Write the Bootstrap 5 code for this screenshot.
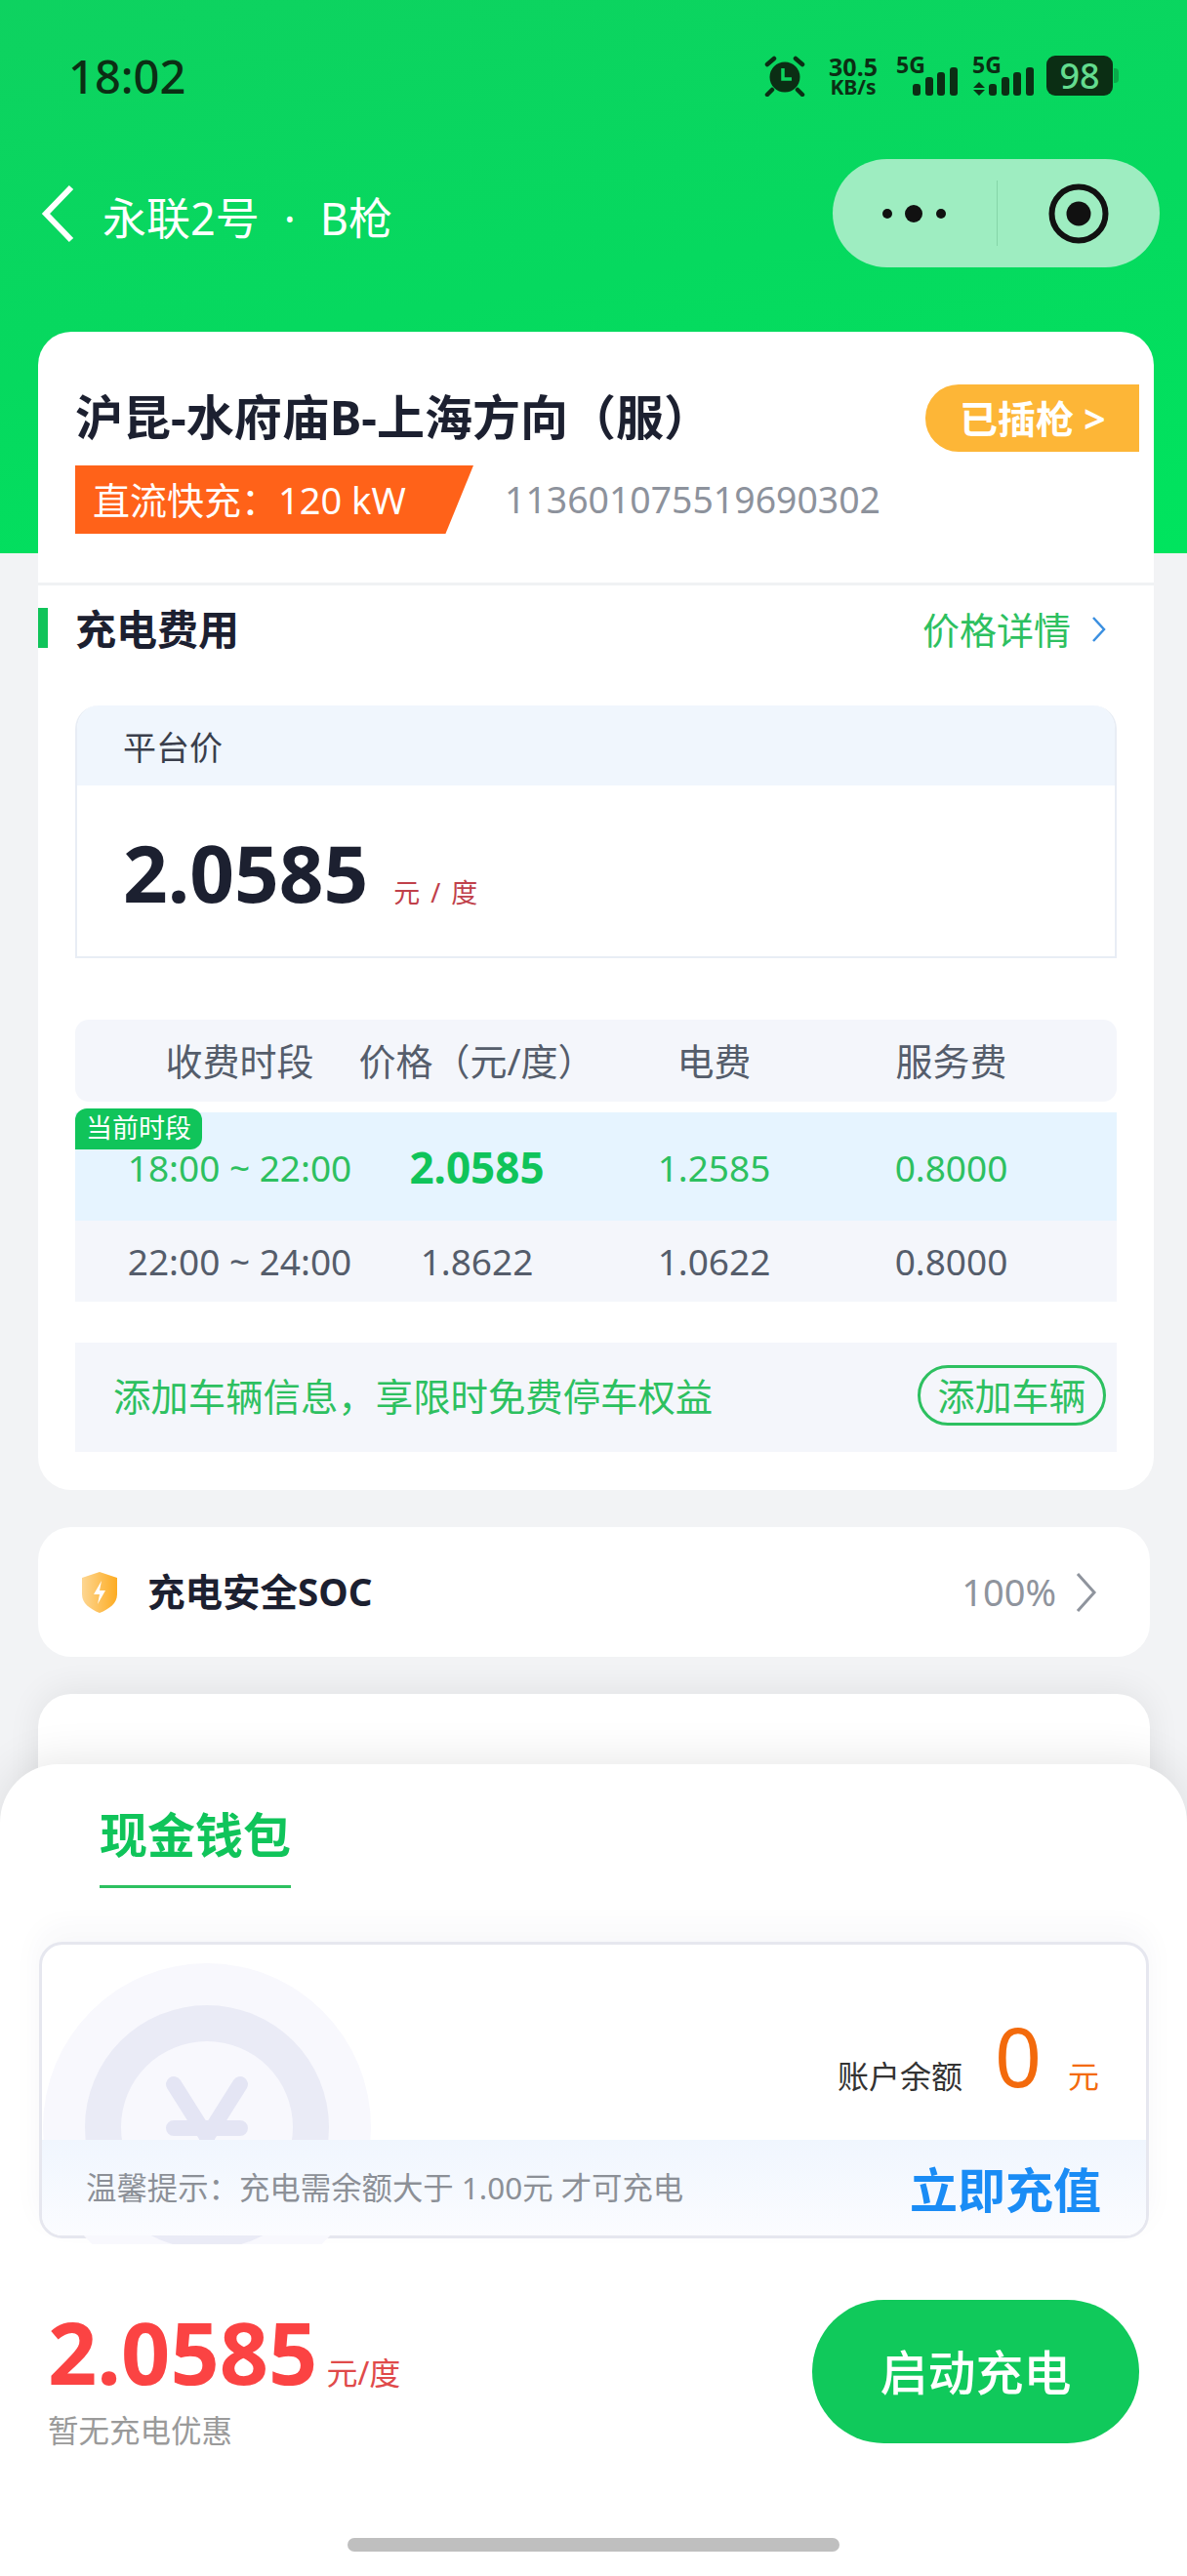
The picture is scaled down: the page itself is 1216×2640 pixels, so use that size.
<!DOCTYPE html>
<html lang="zh-CN">
<head>
    <meta charset="UTF-8">
    <meta name="viewport" content="width=device-width, initial-scale=1.0">
    <title>永联2号 B枪</title>
    <link href="https://cdn.jsdelivr.net/npm/bootstrap@5.3.0/dist/css/bootstrap.min.css" rel="stylesheet">
    <style>
        html, body { margin: 0; height: 2640px; overflow: hidden; }
        body { position: relative; width: 1216px; background: #f2f3f5; font-family: "Noto Sans", "Noto Sans CJK SC", sans-serif; color: #1c2030; }

        /* 顶部绿色区域 */
        .hero { height: 567px; background: linear-gradient(170deg, #0ed260 0%, #06d95f 50%, #00e45e 100%); }
        .status-row { height: 157px; padding: 53px 76px 0 70px; color: #0b2e14; }
        .clock { font-size: 47px; line-height: 50px; font-weight: 500; }
        .status-icons { padding-top: 4px; }
        .net-speed { width: 56px; margin: 0 16px 0 20px; font-weight: 700; text-align: center; }
        .net-speed div:first-child { font-size: 25px; line-height: 22px; }
        .net-speed div:last-child { font-size: 21px; line-height: 20px; }
        .sim { width: 64px; height: 41px; margin-right: 14px; position: relative; }
        .sim span { position: absolute; left: 0; top: -1px; font-size: 23px; line-height: 20px; font-weight: 700; }
        .sim svg { position: absolute; left: 0; top: 0; }
        .battery { width: 68px; height: 41px; background: #0b2e14; border-radius: 9px; color: #63dc8e; font-size: 36px; line-height: 41px; font-weight: 500; text-align: center; position: relative; margin-left: -2px; }
        .battery::after { content: ""; position: absolute; left: 69px; top: 13px; width: 5px; height: 15px; background: #0aa94b; border-radius: 0 4px 4px 0; }
        .nav-row { height: 117px; padding: 6px 28px 0 42px; }
        .page-title { font-size: 45px; line-height: 48px; color: #fff; margin-left: 29px; padding-top: 10px; }
        .page-title i { font-style: normal; margin: 0 25px; }
        .capsule { width: 335px; height: 111px; background: #9eedc1; border-radius: 56px; }
        .capsule-part { height: 100%; }
        .capsule-sep { width: 1px; height: 67px; background: #85d5a8; }

        /* 卡片 */
        .page-body { margin-top: -227px; padding: 0 34px 0 39px; }
        .sheet-card { background: #fff; border-radius: 34px; }
        .station-top { height: 257px; position: relative; padding: 59px 0 0 38px; }
        .station-name { font-size: 49px; line-height: 56px; font-weight: 700; margin: 0; }
        .plug-state { position: absolute; right: 15px; top: 54px; width: 219px; height: 69px; background: #fdb637; color: #fff; border-radius: 34px 0 0 34px; font-size: 39px; line-height: 69px; font-weight: 700; padding-left: 35px; }
        .power-line { margin-top: 22px; }
        .power-tag { width: 408px; height: 70px; background: #ff6219; color: #fff; font-size: 38px; line-height: 70px; padding-left: 18px; clip-path: polygon(0 0, 100% 0, 93% 100%, 0 100%); }
        .pile-code { font-size: 37.4px; color: #8d929c; margin-left: 32px; line-height: 70px; }
        .sheet-rule { height: 3px; background: #f0f2f4; }
        .fee-head { height: 50px; margin-top: 20px; position: relative; padding: 0 48px 0 38px; }
        .fee-head::before { content: ""; position: absolute; left: 0; top: 3px; width: 10px; height: 41px; background: #10c45a; }
        .fee-title { font-size: 42px; line-height: 50px; font-weight: 700; }
        .price-link { font-size: 38px; line-height: 50px; color: #2dc060; gap: 21px; }
        .price-box { margin: 53px 38px 0; height: 259px; border: 2px solid #e8edf5; border-top: 0; border-radius: 24px 24px 0 0; overflow: hidden; }
        .price-box-head { height: 82px; background: #f0f6fd; font-size: 34px; line-height: 86px; padding-left: 47px; color: #3a3f4c; }
        .price-box-body { padding: 41px 0 0 47px; }
        .price-big { font-size: 80px; line-height: 96px; font-weight: 700; color: #1c2030; }
        .price-unit { font-size: 27px; color: #c0404a; margin-left: 26px; word-spacing: 4px; }

        /* 时段表 */
        .tariff { margin: 63px 38px 0; position: relative; }
        .tariff-row { display: grid; grid-template-columns: repeat(4, 243px); padding-left: 47px; text-align: center; font-size: 38px; color: #555d6b; }
        .tariff-head { height: 84px; line-height: 84px; background: #f4f6fb; border-radius: 14px; }
        .tariff-now, .tariff-next { font-size: 37px; }
        .tariff-now { margin-top: 11px; height: 111px; background: #e6f4ff; line-height: 113px; color: #2dc060; }
        .tariff-next { height: 83px; line-height: 84px; background: #f4f6fb; }
        .now-price { font-size: 44px; font-weight: 700; color: #10c45a; }
        .now-flag { position: absolute; left: 0; top: 91px; width: 130px; height: 42px; background: #10c45a; color: #fff; font-size: 27px; line-height: 40px; text-align: center; border-radius: 12px 12px 12px 0; }
        .car-tip { margin: 42px 38px 0; height: 112px; background: #f4f6fb; padding: 0 9px 0 39px; color: #2dc060; font-size: 38.4px; }
        .car-btn { width: 193px; height: 62px; border: 3px solid #2dc060; border-radius: 31px; font-size: 38px; line-height: 54px; text-align: center; background: transparent; color: #2dc060; padding: 0; margin-top: -4px; margin-right: 2px; }

        .soc-card { height: 133px; margin: 38px 4px 0 0; padding: 0 54px 0 44px; }
        .soc-name { font-size: 38.5px; font-weight: 700; margin-left: 30px; }
        .soc-val { font-size: 38px; color: #8f949d; margin-right: 20px; }
        .next-card { height: 300px; margin: 38px 4px 0 0; box-shadow: 0 -4px 34px rgba(0, 0, 0, .07); }

        /* 底部弹层 */
        .bottom-sheet { position: absolute; left: 0; right: 0; top: 1808px; bottom: 0; background: #fff; border-radius: 60px 60px 0 0; box-shadow: 0 -6px 44px rgba(0, 0, 0, .09); }
        .wallet-tab { display: block; margin: 44px 0 0 102px; width: 196px; border-bottom: 3px solid #2dc060; height: 83px; text-align: center; font-size: 49px; line-height: 56px; font-weight: 700; color: #10c45a; white-space: nowrap; }
        .wallet { position: relative; margin: 55px 39px 0 40px; height: 304px; border: 3px solid #e6e7ef; border-radius: 24px; box-shadow: 0 -14px 30px rgba(60, 60, 110, .04); background: #fff; }
        .wallet-coin { position: absolute; left: 1px; top: 19px; }
        .wallet-balance { position: absolute; right: 48px; top: 69px; height: 90px; }
        .balance-label { font-size: 32px; color: #333; }
        .balance-num { font-size: 84px; line-height: 90px; color: #f36a0c; margin: 0 27px 0 33px; font-weight: 400; }
        .balance-unit { font-size: 32px; color: #f36a0c; }
        .wallet-foot { position: absolute; left: 0; right: 0; bottom: 0; height: 98px; background: linear-gradient(180deg, #f0f6fe 0%, #fbfcff 100%); border-radius: 0 0 21px 21px; padding: 0 46px 0 45px; }
        .tip-text { font-size: 31.4px; color: #8c9097; }
        .recharge { font-size: 49px; line-height: 56px; font-weight: 700; color: #1a8cf5; padding-top: 3px; }
        .pay-row { margin-top: 60px; padding: 0 49px; height: 150px; }
        .pay-block { padding-top: 6px; }
        .pay-price { font-size: 88px; line-height: 100px; font-weight: 700; color: #fb4343; }
        .pay-unit { font-size: 32px; color: #e04a4a; margin-left: 9px; }
        .pay-note { font-size: 31.5px; line-height: 40px; color: #9a9a9a; margin-top: 11px; }
        .start-btn { width: 335px; height: 147px; border: 0; border-radius: 74px; background: #10c95b; color: #fff; font-size: 49px; font-weight: 500; padding: 3px 0 0; margin-top: 3px; }
        .home-bar { position: absolute; left: 356px; top: 793px; width: 504px; height: 14px; border-radius: 7px; background: #bfbfbf; }
    </style>
</head>
<body>

<!-- 顶部 -->
<header class="hero">
    <div class="status-row d-flex align-items-start justify-content-between">
        <div class="clock">18:02</div>
        <div class="status-icons d-flex align-items-start">
            <svg width="44" height="42" viewBox="0 0 44 42">
                <circle cx="22" cy="22" r="15.5" fill="#0b2e14"/>
                <path d="M4 9l7-6M40 9l-7-6M9 35l-5 5M35 35l5 5" stroke="#0b2e14" stroke-width="4.5" stroke-linecap="round"/>
                <path d="M20 13v11h9" fill="none" stroke="#0cd35e" stroke-width="3.5"/>
            </svg>
            <div class="net-speed">
                <div>30.5</div>
                <div>KB/s</div>
            </div>
            <div class="sim">
                <span>5G</span>
                <svg width="64" height="41" viewBox="0 0 64 41" fill="#0b2e14">
                    <rect x="17" y="29" width="8" height="12" rx="3"/>
                    <rect x="30" y="22" width="8" height="19" rx="3"/>
                    <rect x="42" y="17" width="8" height="24" rx="3"/>
                    <rect x="55" y="12" width="8" height="29" rx="3"/>
                </svg>
            </div>
            <div class="sim">
                <span>5G</span>
                <svg width="64" height="41" viewBox="0 0 64 41" fill="#0b2e14">
                    <path d="M7 27l6 6H1zM7 41l-6-6h12z"/>
                    <rect x="17" y="29" width="8" height="12" rx="3"/>
                    <rect x="30" y="22" width="8" height="19" rx="3"/>
                    <rect x="42" y="17" width="8" height="24" rx="3"/>
                    <rect x="55" y="12" width="8" height="29" rx="3"/>
                </svg>
            </div>
            <div class="battery">98</div>
        </div>
    </div>
    <div class="nav-row d-flex align-items-center justify-content-between">
        <div class="d-flex align-items-center">
            <svg width="34" height="60" viewBox="0 0 34 60">
                <path d="M31 3L5 30l26 27" fill="none" stroke="#fff" stroke-width="6"/>
            </svg>
            <div class="page-title">永联2号<i>·</i>B枪</div>
        </div>
        <div class="capsule d-flex align-items-center">
            <div class="capsule-part d-flex align-items-center justify-content-center flex-grow-1">
                <svg width="66" height="22" viewBox="0 0 66 22" fill="#111">
                    <circle cx="5" cy="11" r="5"/><circle cx="32" cy="11" r="9"/><circle cx="60" cy="11" r="5"/>
                </svg>
            </div>
            <div class="capsule-sep"></div>
            <div class="capsule-part d-flex align-items-center justify-content-center flex-grow-1">
                <svg width="64" height="64" viewBox="0 0 64 64">
                    <circle cx="32" cy="32" r="27.5" fill="none" stroke="#111" stroke-width="6"/>
                    <circle cx="32" cy="32" r="12.5" fill="#111"/>
                </svg>
            </div>
        </div>
    </div>
</header>

<main class="page-body">
    <section class="sheet-card">
        <div class="station-top">
            <h1 class="station-name">沪昆-水府庙B-上海方向（服）</h1>
            <div class="plug-state">已插枪 &gt;</div>
            <div class="power-line d-flex">
                <div class="power-tag">直流快充：120 kW</div>
                <div class="pile-code">113601075519690302</div>
            </div>
        </div>
        <div class="sheet-rule"></div>

        <div class="fee-head d-flex justify-content-between">
            <div class="fee-title">充电费用</div>
            <div class="price-link d-flex align-items-center">
                <span>价格详情</span>
                <svg width="16" height="28" viewBox="0 0 16 28"><path d="M2 2l11 12L2 26" fill="none" stroke="#3a8fe0" stroke-width="2.5"/></svg>
            </div>
        </div>

        <div class="price-box">
            <div class="price-box-head">平台价</div>
            <div class="price-box-body">
                <span class="price-big">2.0585</span><span class="price-unit">元 / 度</span>
            </div>
        </div>

        <div class="tariff">
            <div class="tariff-row tariff-head">
                <div>收费时段</div><div>价格（元/度）</div><div>电费</div><div>服务费</div>
            </div>
            <div class="tariff-row tariff-now">
                <div>18:00 ~ 22:00</div><div class="now-price">2.0585</div><div>1.2585</div><div>0.8000</div>
            </div>
            <div class="tariff-row tariff-next">
                <div>22:00 ~ 24:00</div><div>1.8622</div><div>1.0622</div><div>0.8000</div>
            </div>
            <div class="now-flag">当前时段</div>
        </div>

        <div class="car-tip d-flex align-items-center justify-content-between">
            <span>添加车辆信息，享限时免费停车权益</span>
            <button type="button" class="btn car-btn">添加车辆</button>
        </div>
        <div style="height:39px"></div>
    </section>

    <section class="sheet-card soc-card d-flex align-items-center justify-content-between">
        <div class="d-flex align-items-center">
            <svg width="38" height="42" viewBox="0 0 38 42">
                <defs>
                    <linearGradient id="shieldFill" x1="0" y1="0" x2="1" y2="0">
                        <stop offset="0" stop-color="#fdd692"/><stop offset="1" stop-color="#fdac22"/>
                    </linearGradient>
                </defs>
                <path d="M19 0l18 6v17c0 9-8 15-18 19C9 38 1 32 1 23V6z" fill="url(#shieldFill)"/>
                <path d="M21 9l-8 14h6l-2 10 8-14h-6z" fill="#fff"/>
            </svg>
            <span class="soc-name">充电安全SOC</span>
        </div>
        <div class="d-flex align-items-center">
            <span class="soc-val">100%</span>
            <svg width="22" height="40" viewBox="0 0 22 40"><path d="M2 1l17 19L2 39" fill="none" stroke="#8f949d" stroke-width="3"/></svg>
        </div>
    </section>

    <section class="sheet-card next-card"></section>
</main>

<!-- 底部钱包 -->
<aside class="bottom-sheet">
    <div class="wallet-tab">现金钱包</div>
    <div class="wallet">
        <svg class="wallet-coin" width="340" height="288" viewBox="0 0 340 288">
            <circle cx="168" cy="168" r="168" fill="#f8f8fd"/>
            <circle cx="168" cy="168" r="125" fill="#eaebf6"/>
            <circle cx="168" cy="168" r="88" fill="#f8f8fd"/>
            <path d="M134 124l34 54 34-54" fill="none" stroke="#e4e5f4" stroke-width="16" stroke-linecap="round" stroke-linejoin="round"/>
            <path d="M134 169h68M168 170v40" fill="none" stroke="#e4e5f4" stroke-width="16" stroke-linecap="round"/>
        </svg>
        <div class="wallet-balance d-flex align-items-end">
            <span class="balance-label">账户余额</span>
            <span class="balance-num">0</span>
            <span class="balance-unit">元</span>
        </div>
        <div class="wallet-foot d-flex align-items-center justify-content-between">
            <span class="tip-text">温馨提示：充电需余额大于 1.00元 才可充电</span>
            <span class="recharge">立即充值</span>
        </div>
    </div>
    <div class="pay-row d-flex align-items-start justify-content-between">
        <div class="pay-block">
            <div><span class="pay-price">2.0585</span><span class="pay-unit">元/度</span></div>
            <div class="pay-note">暂无充电优惠</div>
        </div>
        <button type="button" class="btn start-btn">启动充电</button>
    </div>
    <div class="home-bar"></div>
</aside>

<script src="https://cdn.jsdelivr.net/npm/bootstrap@5.3.0/dist/js/bootstrap.bundle.min.js"></script>
</body>
</html>
